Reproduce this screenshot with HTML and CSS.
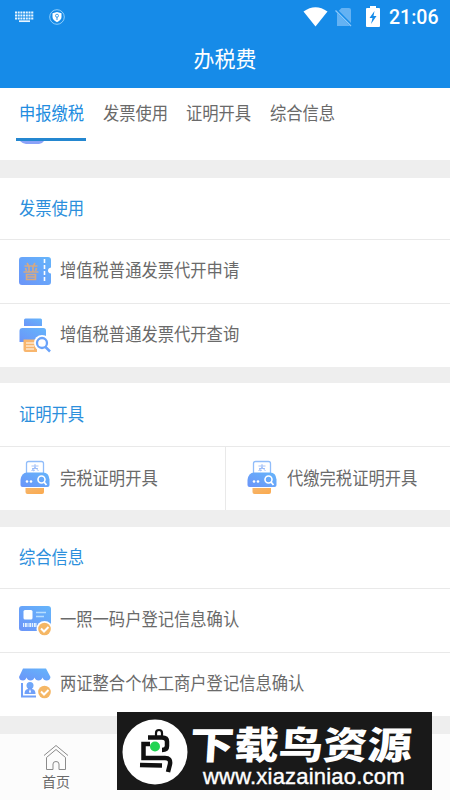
FILE: index.html
```html
<!DOCTYPE html>
<html lang="zh-CN">
<head>
<meta charset="utf-8">
<title>办税费</title>
<link rel="stylesheet" href="styles.css">
</head>
<body>
<svg class="defs" width="0" height="0">
  <defs>
    <linearGradient id="blue" x1="1" y1="0" x2="0" y2="1"><stop offset="0" stop-color="#65b5fb"/><stop offset="1" stop-color="#6b94f8"/></linearGradient>
    <linearGradient id="orange" x1="0" y1="0" x2="1" y2="1"><stop offset="0" stop-color="#f5b66d"/><stop offset="1" stop-color="#fba94d"/></linearGradient>
    <symbol id="certificate" viewBox="0 0 34 36">
      <path d="M7.500 13V3.500q0-2 2-2h13q2 0 2 2V13" fill="#fff" stroke="#91bdfa" stroke-width="1.300"/>
      <path d="M16 4v3M12.500 6h7M13 8.500h6M16 7l-3.500 4M14 8.500V11l2-1M16 7l3.500 4" fill="none" stroke="#8fb4f8" stroke-width=".8"/>
      <path d="M8 12.500h16q6 0 6.500 7V25q0 2-2 2h-25q-2 0-2-2v-5q1-7.500 6.500-7.500z" fill="url(#blue)"/>
      <circle cx="8" cy="21.500" r="1.300" fill="#fff"/><circle cx="12" cy="21.500" r="1.300" fill="#fff"/>
      <circle cx="22.500" cy="19.500" r="3.500" fill="none" stroke="#fff" stroke-width="1.600"/><path d="M25 22l2.500 3" stroke="#fff" stroke-width="1.800"/>
      <path d="M6.500 28H25v4q0 2-2 2H8.500q-2 0-2-2z" fill="url(#orange)"/>
    </symbol>
  </defs>
</svg>
<div class="app">
  <header class="header">
    <div class="status">
      <div class="status-left">
        <svg width="19" height="12" viewBox="0 0 19 12"><path d="M0 1.500h19M0 4.500h19M0 7.500h19" stroke="#e8f5ff" stroke-width="2.200" stroke-dasharray="2 .7"/><path d="M4 10.200h11" stroke="#e8f5ff" stroke-width="1.700"/></svg>
        <svg width="16" height="16" viewBox="0 0 16 16"><circle cx="8" cy="8" r="7.300" fill="none" stroke="#8dcdfb" stroke-width="1"/><path d="M8 3l4.500 1.300V8q0 3-4.500 5.300Q3.500 11 3.500 8V4.300z" fill="#fff"/><circle cx="8" cy="6.700" r="1.500" fill="none" stroke="#168be8" stroke-width=".8"/><path d="M8 8v3" stroke="#168be8" stroke-width=".9"/></svg>
      </div>
      <div class="status-right">
        <svg class="wifi" width="25" height="20" viewBox="0 0 25 20"><path d="M.5 4.500Q12.500-4 24.500 4.500L12.500 19.500z" fill="#fff"/></svg>
        <svg class="sim" width="18" height="20" viewBox="0 0 18 20"><path d="M6.500 1H14q2 0 2 2v16H2V5.500z" fill="#64b2f3"/><path d="M.5 2.500L17 19" stroke="#168be8" stroke-width="3"/><path d="M.5 3.500L16 19" stroke="#8bc8fb" stroke-width="1.300"/></svg>
        <svg class="battery" width="14" height="22" viewBox="0 0 14 22"><path d="M4 0h6v2h3q1 0 1 1v17q0 1-1 1H1q-1 0-1-1V3q0-1 1-1h3z" fill="#fff"/><path d="M8.500 5L3.500 12H6.500l-1.500 6 5.500-8H7.500z" fill="#168be8"/></svg>
        <span class="clock">21:06</span>
      </div>
    </div>
    <h1 class="title">办税费</h1>
  </header>
  <nav class="tabs">
    <div class="tab active"><span class="text">申报缴税</span></div>
    <div class="tab"><span class="text">发票使用</span></div>
    <div class="tab"><span class="text">证明开具</span></div>
    <div class="tab"><span class="text">综合信息</span></div>
  </nav>
  <div class="clipped"><svg width="24" height="4" viewBox="0 0 24 4"><path d="M0 0h24q-2 3-5 3H6Q3 3 0 0z" fill="#8aa2f8"/></svg></div>

  <section class="group invoice">
    <h2 class="heading"><span class="text">发票使用</span></h2>
    <div class="row">
      <svg class="icon" width="34" height="36" viewBox="0 0 34 36"><path d="M3 4h26q3 0 3 3v7.500q-3 .5-3 3t3 3V29q0 3-3 3H3q-3 0-3-3V7q0-3 3-3z" fill="url(#blue)"/><path d="M25.500 6v24" stroke="#fff" stroke-width="1.600" stroke-dasharray="4 2"/><path d="M8 10l1.500 2.500M16 10l-1.500 2.500M5.500 13h13M10 13v6M14 13v6M6.500 15l1 3M17.500 15l-1 3M4.500 19h15M7.500 21.500h9v5h-9zM7.500 24h9" fill="none" stroke="#d5a984" stroke-width="1.600"/></svg>
      <span class="text">增值税普通发票代开申请</span>
    </div>
    <div class="row">
      <svg class="icon" width="34" height="36" viewBox="0 0 34 36"><path d="M5 9V3q0-1.500 1.500-1.500h15Q23 1.500 23 3v6z" fill="url(#blue)"/><path d="M3.500 11h21q2.500 0 2.500 2.500V25H.5V14q0-3 3-3z" fill="url(#blue)"/><path d="M4.500 22.500H18V35H6.500q-2 0-2-2z" fill="#f8b66e"/><path d="M7 26h8M7 29h8M7 32h8" stroke="#fff" stroke-width="1"/><circle cx="23" cy="26" r="8" fill="#fff"/><circle cx="23" cy="26" r="5" fill="#fff" stroke="#6aa3fa" stroke-width="2.300"/><path d="M26.500 30l4.500 4.500" stroke="#6aa3fa" stroke-width="2.500"/></svg>
      <span class="text">增值税普通发票代开查询</span>
    </div>
  </section>

  <section class="group certificate">
    <h2 class="heading"><span class="text">证明开具</span></h2>
    <div class="columns">
      <div class="row"><svg class="icon" width="34" height="36"><use href="#certificate"/></svg><span class="text">完税证明开具</span></div>
      <div class="row"><svg class="icon" width="34" height="36"><use href="#certificate"/></svg><span class="text">代缴完税证明开具</span></div>
    </div>
  </section>

  <section class="group general">
    <h2 class="heading"><span class="text">综合信息</span></h2>
    <div class="row">
      <svg class="icon" width="34" height="36" viewBox="0 0 34 36"><rect y="4" width="32" height="25" rx="3" fill="url(#blue)"/><rect x="4.500" y="8" width="9" height="9.500" rx="1.500" fill="#fff"/><path d="M17 10.500h10M17 14.500h8" stroke="#b7deff" stroke-width="1.400"/><path d="M4 23h14" stroke="#e4f2ff" stroke-width="4" stroke-dasharray="1 .8 2 .7"/><circle cx="25.500" cy="27" r="8" fill="#fff"/><circle cx="25.500" cy="27" r="6.300" fill="#f5b765"/><path d="M22 26.500l3 3 4.500-4.500" fill="none" stroke="#fff" stroke-width="2"/></svg>
      <span class="text">一照一码户登记信息确认</span>
    </div>
    <div class="row">
      <svg class="icon" width="34" height="36" viewBox="0 0 34 36"><path d="M4 2.500h23L31.500 11q-.5 3.500-4 3.500-3 0-4-3-1 3-4 3t-4-3q-1 3-4 3t-4-3q-1 3-3.500 3Q.5 14.500 0 11z" fill="url(#blue)"/><path d="M3 17v13.500h14" fill="none" stroke="#70a0f9" stroke-width="2"/><circle cx="11" cy="19.500" r="3.500" fill="#70a7f9"/><path d="M9 21h4v2q3.500.5 3.500 5h-11q0-4.500 3.500-5z" fill="#70a0f9"/><path d="M11 23l-1 3 1 1 1-1z" fill="#fff"/><circle cx="25.500" cy="26" r="6.300" fill="#f5b765"/><path d="M22 25.500l3 3 4.500-4.500" fill="none" stroke="#fff" stroke-width="2"/></svg>
      <span class="text">两证整合个体工商户登记信息确认</span>
    </div>
  </section>

  <footer class="bottom">
    <div class="home">
      <svg width="26" height="27" viewBox="0 0 26 27"><path d="M1 11.500L13 1.500l12 10M3.500 13.500L13 5.500l9.500 8V25.500H16V20q0-2.500-3-2.500T10 20v5.500H3.500z" fill="none" stroke="#8b8b8b" stroke-width="1"/></svg>
      <span class="home-label">首页</span>
    </div>
  </footer>

  <div class="watermark">
    <svg class="bird" width="66" height="66" viewBox="0 0 66 66"><circle cx="33" cy="33" r="32.500" fill="#fff"/><g fill="none" stroke="#111" stroke-width="4.500"><path d="M34 18v-4q0-3 3-3t3 3v3" stroke-width="2.200"/><path d="M26 18.500h14q5 0 5 4V27q0 4-5 4"/><path d="M28 25h-6.500v14H43q6 0 5 6l-2 8"/><path d="M18 46l22 .5"/></g><circle cx="33" cy="27.500" r="5" fill="#20d452"/></svg>
    <div class="brand"><span class="brand-name">下载鸟资源</span><span class="brand-url">www.xiazainiao.com</span></div>
  </div>
</div>
</body>
</html>
```
FILE: styles.css
```css
* { box-sizing: border-box; }
body { margin: 0; font-family: "Noto Sans CJK SC", sans-serif; font-size: 18px; color: #6a6a6a; }
.defs { display: block; height: 0; }
.app { position: relative; width: 450px; height: 800px; overflow: hidden; background: #eee; display: flex; flex-direction: column; }
.header { height: 88px; flex: none; background: #168be8; color: #fff; }
.status { height: 36px; display: flex; justify-content: space-between; padding: 0 12px 0 15px; }
.status-left { display: flex; gap: 15px; }
.status-left svg { margin-top: 9px; }
.status-left svg:first-child { margin-top: 11px; }
.status-right { display: flex; align-items: flex-start; }
.wifi { margin: 7px 7px 0 0; }
.sim { margin: 7px 13px 0 0; }
.battery { margin: 6px 9px 0 0; }
.clock { width: 49px; font: 500 19.500px/36px Roboto, sans-serif; white-space: nowrap; }
.title { margin: 3px 0 0; text-align: center; font-weight: 400; font-size: 22px; line-height: 36px; transform: scaleX(.955); }
.text { display: inline-block; white-space: nowrap; transform: scaleX(.905); transform-origin: left center; }
.tabs { height: 53px; flex: none; background: #fff; display: flex; padding-left: 16px; }
.tab { width: 70px; height: 53px; margin-right: 13.700px; padding-left: 3px; line-height: 48px; }
.tab .text { width: 72px; }
.active { color: #218ce0; border-bottom: 3px solid #2487d0; }
.clipped { height: 19px; flex: none; padding-left: 20px; background: #fff; line-height: 0; }
.clipped svg { display: block; }
.group { flex: none; margin-top: 17.500px; background: #fff; }
.heading { height: 61px; margin: 0; padding-left: 19px; font-size: 18px; font-weight: 400; line-height: 59px; color: #2c8fdc; }
.row { height: 64px; display: flex; align-items: center; padding-left: 19px; border-top: 1px solid #e9e9e9; }
.row .text { line-height: 60px; padding-bottom: 4px; }
.icon { flex: none; margin-right: 7px; }
.certificate { margin-top: 16.500px; }
.certificate .heading { height: 63px; line-height: 61px; }
.columns { display: grid; grid-template-columns: 225px 225px; }
.certificate .icon { margin-top: -2px; }
.columns .row + .row { border-left: 1px solid #e9e9e9; padding-left: 20px; }
.general { margin-top: 16.500px; }
.bottom { flex: 1; margin-top: 18px; background: #fcfcfc; }
.home { width: 112px; padding-top: 10px; display: flex; flex-direction: column; align-items: center; }
.home-label { font-size: 14px; line-height: 20px; margin-top: 0; }
.watermark { position: absolute; left: 117px; top: 712px; width: 315px; height: 78px; background: #191919; color: #fff; display: flex; padding: 7px 0 0 5px; }
.bird { flex: none; }
.brand { display: flex; flex-direction: column; padding-left: 2px; }
.brand-name { height: 47px; font-size: 38px; line-height: 48px; font-weight: 900; white-space: nowrap; transform: scaleX(1.17) skewX(-3deg); transform-origin: left center; }
.brand-url { padding-left: 13px; font: 22px/22px "Liberation Sans", sans-serif; letter-spacing: .2px; -webkit-text-stroke: .4px #fff; }
```
